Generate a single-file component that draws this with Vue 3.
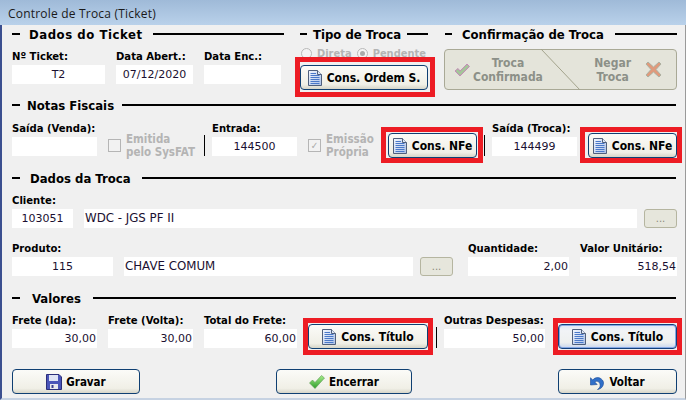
<template>
  <div class="window">
    <svg class="defs" width="0" height="0">
      <defs>
        <linearGradient id="docFill" x1="0" y1="0" x2="1" y2="1">
          <stop offset="0" stop-color="#f4f8ff" />
          <stop offset="1" stop-color="#a9bfe6" />
        </linearGradient>
        <linearGradient id="okFill" x1="0" y1="0" x2="0" y2="1">
          <stop offset="0" stop-color="#a6ec8a" />
          <stop offset="1" stop-color="#2f9e2c" />
        </linearGradient>
        <symbol id="doc" viewBox="0 0 14 16">
          <path d="M.5.5H9.500L13.500 4.500V15.500H.5Z" fill="url(#docFill)" stroke="#4f5f7c" />
          <path d="M9.500.5V4.500H13.500" fill="#dfe8f6" stroke="#4f5f7c" />
          <path d="M2.500 3.500H8M2.500 5.500H11.500M2.500 7.500H11.500M2.500 9.500H11.500M2.500 11.500H11.500M2.500 13.500H11.500" stroke="#4a78c8" />
        </symbol>
      </defs>
    </svg>

    <div class="titlebar">Controle de Troca (Ticket)</div>

    <div class="content">
      <div class="heads">
        <div class="head w272"><i class="dash"></i><b class="gap-9 wide">Dados do Ticket</b><i class="rule"></i></div>
        <div class="head w128 ml16"><i class="dash d7"></i><b class="gap-6">Tipo de Troca</b><i class="rule"></i></div>
        <div class="head w232 ml17"><i class="dash d7"></i><b class="gap-10">Confirmação de Troca</b><i class="rule"></i></div>
      </div>

      <div class="row row-ticket">
        <div class="field w93"><label>Nº Ticket:</label><div class="input center">T2</div></div>
        <div class="field w77 ml11"><label>Data Abert.:</label><div class="input center">07/12/2020</div></div>
        <div class="field w77 ml11"><label>Data Enc.:</label><div class="input"></div></div>
        <div class="tipo">
          <div class="radios">
            <span class="radio"></span><span>Direta</span>
            <span class="radio on"></span><span>Pendente</span>
          </div>
          <button class="btn w128 mark mark-os">
            <svg width="14" height="16"><use href="#doc" /></svg>Cons. Ordem S.
          </button>
        </div>
        <div class="confirm">
          <svg class="confirm-cut" width="233" height="41" viewBox="0 0 233 41">
            <path d="M97 0L136 41" fill="none" stroke="#a3a38c" />
          </svg>
          <div class="half">
            <svg width="16" height="14" viewBox="0 0 16 14">
              <path d="M1 8L4 5.500L6 8L13 1L15.500 3.500L6 13Z" fill="#a5c49a" stroke="#c58ab8" />
            </svg>
            <span>Troca<br />Confirmada</span>
          </div>
          <div class="half half-right">
            <span>Negar<br />Troca</span>
            <svg width="17" height="17" viewBox="0 0 17 17">
              <path d="M3 1L8.500 6L14 1L16 3L11 8.500L16 14L14 16L8.500 11L3 16L1 14L6 8.500L1 3Z" fill="#e09a7c" stroke="#aeb0a0" />
            </svg>
          </div>
        </div>
      </div>

      <div class="heads">
        <div class="head w664"><i class="dash"></i><b class="gap-7">Notas Fiscais</b><i class="rule"></i></div>
      </div>

      <div class="row row-notes">
        <div class="field w85"><label>Saída (Venda):</label><div class="input"></div></div>
        <div class="check w85 ml11"><span class="box"></span><span>Emitida<br />pelo SysFAT</span></div>
        <i class="sep ml11"></i>
        <div class="field w85 ml7"><label>Entrada:</label><div class="input center">144500</div></div>
        <div class="check w80 ml11"><span class="box">✓</span><span>Emissão<br />Própria</span></div>
        <button class="btn w89 btn-note mark mark-nfe">
          <svg width="14" height="16"><use href="#doc" /></svg>Cons. NFe
        </button>
        <i class="sep ml7"></i>
        <div class="field w85 ml7"><label>Saída (Troca):</label><div class="input center">144499</div></div>
        <button class="btn w89 ml11 btn-note mark mark-nfe2">
          <svg width="14" height="16"><use href="#doc" /></svg>Cons. NFe
        </button>
      </div>

      <div class="heads">
        <div class="head w664"><i class="dash"></i><b class="gap-10">Dados da Troca</b><i class="rule"></i></div>
      </div>

      <div class="row row-client">
        <div class="field w61"><label>Cliente:</label><div class="input center">103051</div></div>
        <div class="field w553 ml11"><label>&nbsp;</label><div class="input text">WDC - JGS PF II</div></div>
        <div class="field w33 ml7"><label>&nbsp;</label><button class="dots">...</button></div>
      </div>

      <div class="row row-prod">
        <div class="field w101"><label>Produto:</label><div class="input center">115</div></div>
        <div class="field w289 ml11"><label>&nbsp;</label><div class="input text">CHAVE COMUM</div></div>
        <div class="field w33 ml7"><label>&nbsp;</label><button class="dots">...</button></div>
        <div class="field w101 ml15"><label>Quantidade:</label><div class="input num">2,00</div></div>
        <div class="field w97 ml11"><label>Valor Unitário:</label><div class="input num">518,54</div></div>
      </div>

      <div class="heads">
        <div class="head w664"><i class="dash"></i><b class="gap-12">Valores</b><i class="rule"></i></div>
      </div>

      <div class="row row-val">
        <div class="field w85"><label>Frete (Ida):</label><div class="input num">30,00</div></div>
        <div class="field w85 ml11"><label>Frete (Volta):</label><div class="input num">30,00</div></div>
        <div class="field w93 ml11"><label>Total do Frete:</label><div class="input num">60,00</div></div>
        <button class="btn w120 ml11 btn-val mark mark-tit">
          <svg width="14" height="16"><use href="#doc" /></svg>Cons. Título
        </button>
        <i class="sep ml8"></i>
        <div class="field w101 ml7"><label>Outras Despesas:</label><div class="input num">50,00</div></div>
        <button class="btn w119 ml13 btn-val focus mark mark-tit">
          <svg width="14" height="16"><use href="#doc" /></svg>Cons. Título
        </button>
      </div>

      <div class="row">
        <button class="btn big w128">
          <svg width="16" height="16" viewBox="0 0 16 16">
            <path d="M.5.5H13L15.500 3V15.500H.5Z" fill="#4a55b8" stroke="#2b2f7a" />
            <path d="M3 1H12V7H3Z" fill="#dfe4f5" />
            <path d="M4 10H12V15H4Z" fill="#e8e8ec" />
            <path d="M5.500 11H7.500V14H5.500Z" fill="#3a3f8f" />
          </svg>Gravar
        </button>
        <button class="btn big w136 ml136">
          <svg width="16" height="14" viewBox="0 0 16 14">
            <path d="M.5 8L3.500 5L6 7.500L12.500 .5L15.500 3L6 13.500Z" fill="url(#okFill)" stroke="#5a9a52" stroke-width=".6" />
          </svg>Encerrar
        </button>
        <button class="btn big w119 ml146">
          <svg width="15" height="16" viewBox="0 0 15 16">
            <path d="M13.500 9C13.500 12.500 11 15 7.500 15.500C9.800 14 10.800 12 9.800 9.500C8.800 7.200 6.500 6.500 4.800 8L7.200 10.500L.5 11V3.800L2.800 6C5 3 9 3 11.300 5C13 6.300 13.500 7.800 13.500 9Z" fill="#2f6fc9" stroke="#1c4a94" stroke-width=".6" />
          </svg>Voltar
        </button>
      </div>
    </div>
  </div>
</template>

<script setup>
</script>

<style>
html, body { margin: 0; overflow: hidden; }
</style>

<style scoped>
.window {
  width: 686px;
  height: 400px;
  background: #f0f0f0;
  font-family: "DejaVu Sans", Verdana, sans-serif;
  color: #000;
  overflow: hidden;
}

.defs { position: absolute; }

.titlebar {
  height: 25px;
  padding-left: 8px;
  box-sizing: border-box;
  background: linear-gradient(#9fbad8, #b9d1ea);
  font-family: "Open Sans", sans-serif;
  font-size: 12px;
  letter-spacing: 0.2px;
  line-height: 27px;
  color: #1a1a1a;
}

/* the 2px left border counts towards the 12px margin of the form */
.content {
  height: 375px;
  box-sizing: border-box;
  padding-left: 10px;
  border-left: 2px solid #3b4f8f;
  border-right: 1px solid #9a9a9a;
  border-bottom: 2px solid #c6d2e2;
}

.heads { display: flex; height: 18px; }
.head { display: flex; align-items: center; }
.head b {
  font-size: 13px;
  font-stretch: condensed;
  font-weight: 700;
  white-space: nowrap;
}
.head b.wide { letter-spacing: 0.55px; }
.gap-6 { margin: 0 6px; }
.gap-7 { margin: 0 8px 0 7px; }
.gap-9 { margin: 0 10px 0 9px; }
.gap-10 { margin: 0 11px 0 10px; }
.gap-12 { margin: 0 12px; }

.dash { width: 8px; height: 2px; background: #000; flex: none; }
.d7 { width: 7px; }
.rule { flex: 1; height: 2px; background: #000; }

.row { display: flex; align-items: flex-start; }
.row-ticket { height: 49px; margin-top: 4px; }
.row-notes { height: 50px; margin-top: 5px; }
.row-client { height: 48px; margin-top: 4px; }
.row-prod { height: 50px; }
.row-val { height: 58px; margin-top: 4px; }

.w33 { width: 33px; }
.w61 { width: 61px; }
.w77 { width: 77px; }
.w80 { width: 80px; }
.w85 { width: 85px; }
.w89 { width: 89px; }
.w93 { width: 93px; }
.w97 { width: 97px; }
.w101 { width: 101px; }
.w119 { width: 119px; }
.w120 { width: 120px; }
.w128 { width: 128px; }
.w136 { width: 136px; }
.w232 { width: 232px; }
.w272 { width: 272px; }
.w289 { width: 289px; }
.w553 { width: 553px; }
.w664 { width: 664px; }
.ml7 { margin-left: 7px; }
.ml8 { margin-left: 8px; }
.ml11 { margin-left: 11px; }
.ml13 { margin-left: 13px; }
.ml15 { margin-left: 15px; }
.ml16 { margin-left: 16px; }
.ml17 { margin-left: 17px; }
.ml136 { margin-left: 136px; }
.ml146 { margin-left: 146px; }

.field { display: flex; flex-direction: column; flex: none; }
label {
  height: 18px;
  font-size: 11.200px;
  font-stretch: condensed;
  font-weight: 700;
  line-height: 19px;
  white-space: nowrap;
}
.input {
  height: 19px;
  background: #fff;
  font-size: 11px;
  line-height: 19px;
  color: #1a1030;
  white-space: nowrap;
}
.center { text-align: center; }
.num { text-align: right; padding-right: 1px; }
.text { padding-left: 1px; font-size: 11.800px; }

.dots {
  height: 19px;
  padding: 0;
  border: 1px solid #b5b5a0;
  border-radius: 3px;
  background: #e6e6dc;
  color: #8a8a7a;
  font: 10px/12px "DejaVu Sans", sans-serif;
}

.tipo { width: 128px; margin-left: 19px; flex: none; }
.radios {
  display: flex;
  align-items: center;
  gap: 5px;
  height: 12px;
  margin: 0 0 6px 1px;
  font-size: 11px;
  font-stretch: condensed;
  font-weight: 700;
  color: #b4b4b4;
  white-space: nowrap;
}
.radio {
  flex: none;
  width: 9px;
  height: 9px;
  border: 1px solid #b9b9b9;
  border-radius: 50%;
  background: #f4f4f4;
  position: relative;
}
.radio.on::after {
  content: "";
  position: absolute;
  inset: 2px;
  border-radius: 50%;
  background: #aaa;
}

.btn {
  display: flex;
  flex: none;
  align-items: center;
  justify-content: center;
  gap: 5px;
  position: relative;
  height: 25px;
  padding: 0;
  box-sizing: border-box;
  border: 1px solid #0f3f72;
  border-radius: 4px;
  background: linear-gradient(#fbfbf8, #f0efe6 80%, #d6d5c8);
  font: 700 12px "DejaVu Sans", sans-serif;
  font-stretch: condensed;
  color: #000;
  white-space: nowrap;
}
.btn svg { flex: none; }
.btn.focus {
  background: linear-gradient(#dfe7f6, #f1f3f6 25%, #eef0ef 75%, #c9d6ee);
  border-color: #123f7c;
  box-shadow: inset 0 0 0 1px #86a8e4;
}
.btn-note { margin-top: 14px; }
.btn-val { margin-top: 13px; }
.big { font-size: 11.500px; gap: 4px; }

.mark::after {
  content: "";
  position: absolute;
  border: 5px solid #ed1c24;
  pointer-events: none;
}
.mark-os::after { inset: -9px -8px -8px -6px; }
.mark-nfe::after { inset: -7px -7px -6px -8px; }
.mark-nfe2::after { inset: -7px -6px -6px -9px; }
.mark-tit::after { inset: -7px -6px -7px -6px; }

.check {
  display: flex;
  flex: none;
  align-items: center;
  gap: 5px;
  height: 27px;
  margin-top: 13px;
  font-size: 11.500px;
  font-weight: 700;
  font-stretch: condensed;
  line-height: 13px;
  color: #b4b4b4;
  white-space: nowrap;
}
.box {
  flex: none;
  width: 11px;
  height: 11px;
  border: 1px solid #b5b5b5;
  background: #f2f2f2;
  font-size: 10px;
  font-weight: 700;
  line-height: 11px;
  text-align: center;
  color: #aaa;
}
.sep { flex: none; width: 1px; height: 21px; margin-top: 16px; background: #000; }

.confirm {
  display: flex;
  flex: none;
  position: relative;
  width: 233px;
  height: 41px;
  margin: 2px 0 0 16px;
  box-sizing: border-box;
  border: 1px solid #a9a996;
  border-radius: 4px;
  background: #e4e4da;
  font-size: 12px;
  font-stretch: condensed;
  font-weight: 700;
  line-height: 14px;
  color: #8c9088;
  text-align: center;
}
.confirm-cut { position: absolute; left: -1px; top: -1px; }
.half {
  display: flex;
  align-items: center;
  gap: 3px;
  width: 116px;
  padding-left: 9px;
  box-sizing: border-box;
}
.half-right {
  justify-content: flex-end;
  gap: 14px;
  padding: 0 14px 0 0;
}
</style>
